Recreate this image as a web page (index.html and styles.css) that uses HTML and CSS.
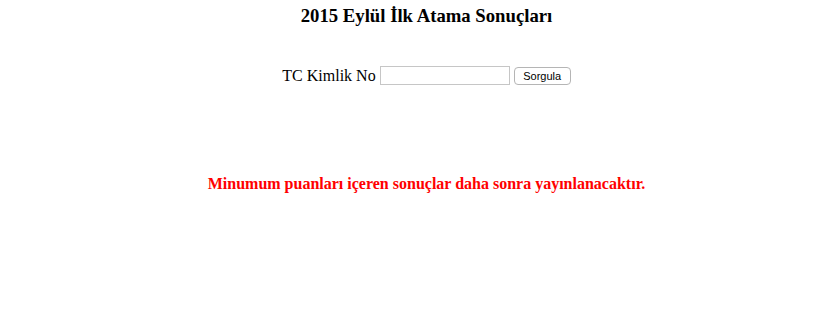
FILE: index.html
```html
<!DOCTYPE html>
<html lang="tr">
<head>
<meta charset="utf-8">
<link rel="stylesheet" href="styles.css">
</head>
<body>
<div class="page">
  <h3 class="title">2015 Eylül İlk Atama Sonuçları</h3>
  <form class="query">
    <label class="label" for="tc">TC Kimlik No</label>
    <input class="field" id="tc" type="text">
    <button class="btn" type="button">Sorgula</button>
  </form>
  <p class="notice">Minumum puanları içeren sonuçlar daha sonra yayınlanacaktır.</p>
</div>
</body>
</html>
```
FILE: styles.css
```css
html, body {
  margin: 0;
  background: #fff;
}
body {
  padding: 0 8px;
  font-family: "Liberation Serif", "Times New Roman", serif;
  color: #000;
}
.page {
  padding-left: 28px;
  text-align: center;
}
.title {
  font-size: 18.72px;
  font-weight: bold;
  margin: 0;
  padding-top: 5px;
  line-height: 22px;
}
.query {
  margin-top: 39px;
  display: flex;
  justify-content: center;
  align-items: center;
  gap: 4px;
  font-size: 16px;
}
.field {
  width: 130px;
  height: 19px;
  box-sizing: border-box;
  border: 1px solid #c6c6c6;
  padding: 1px 2px;
  margin: 0;
}
.btn {
  height: 18px;
  width: 57px;
  box-sizing: border-box;
  padding: 0;
  margin: 0;
  font-family: "Liberation Sans", Arial, sans-serif;
  font-size: 11px;
  background: #fff;
  border: 1px solid #b5b5b5;
  border-radius: 4px;
  color: #000;
}
.notice {
  margin: 89px 0 0;
  color: #ff0000;
  font-weight: bold;
  font-size: 16px;
  line-height: 20px;
}
```
